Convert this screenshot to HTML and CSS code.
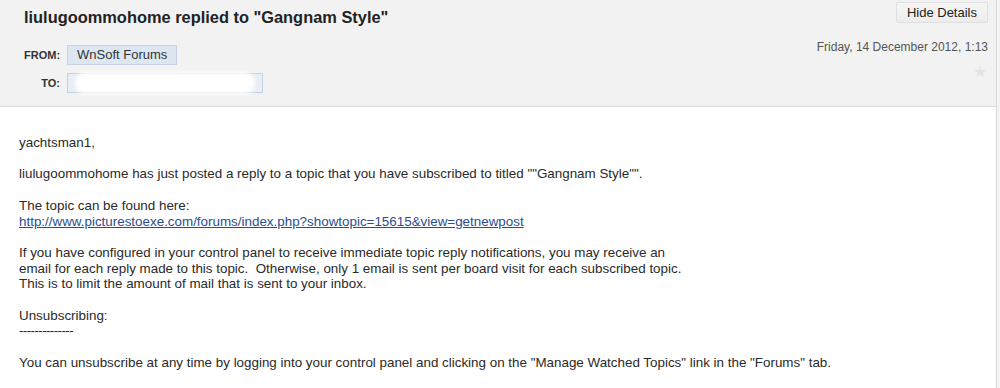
FILE: index.html
```html
<!DOCTYPE html>
<html lang="en">
<head>
    <meta charset="UTF-8">
    <title>liulugoommohome replied to "Gangnam Style"</title>
    <link rel="stylesheet" href="styles.css">
</head>
<body>
    <div class="mail">
        <div class="mail-head">
            <div class="head-left">
                <h1 class="subject">liulugoommohome replied to "Gangnam Style"</h1>
                <div class="addr-row">
                    <span class="addr-label">FROM:</span>
                    <span class="chip">WnSoft Forums</span>
                </div>
                <div class="addr-row">
                    <span class="addr-label">TO:</span>
                    <span class="chip chip-to"><span class="blur"></span></span>
                </div>
            </div>
            <div class="head-right">
                <button class="btn-details">Hide Details</button>
                <div class="date">Friday, 14 December 2012, 1:13</div>
                <div class="star">&#9733;</div>
            </div>
        </div>
        <!-- noi dung email -->
        <div class="mail-body">
            yachtsman1,<br>
            <br>
            liulugoommohome has just posted a reply to a topic that you have subscribed to titled ""Gangnam Style"".<br>
            <br>
            The topic can be found here:<br>
            <a href="#">http://www.picturestoexe.com/forums/index.php?showtopic=15615&amp;view=getnewpost</a><br>
            <br>
            If you have configured in your control panel to receive immediate topic reply notifications, you may receive an<br>
            email for each reply made to this topic.&nbsp; Otherwise, only 1 email is sent per board visit for each subscribed topic.<br>
            This is to limit the amount of mail that is sent to your inbox.<br>
            <br>
            Unsubscribing:<br>
            <span class="dashes">--------------</span><br>
            <br>
            You can unsubscribe at any time by logging into your control panel and clicking on the "Manage Watched Topics" link in the "Forums" tab.
        </div>
    </div>
</body>
</html>
```

FILE: styles.css
```css
*{
    box-sizing: border-box;
    margin: 0;
    padding: 0;
}
body{
    font-family: "Liberation Sans", Arial, sans-serif;
    background: #f4f4f4;
    width: 1000px;
    height: 388px;
    overflow: hidden;
}
.mail{
    width: 997px;
    height: 388px;
    background: #fff;
    border-right: 1px solid #d8d8d8;
}
.mail-head{
    display: flex;
    justify-content: space-between;
    height: 107px;
    background: #f2f2f2;
    border-bottom: 1px solid #dcdcdc;
    padding: 0 8px 0 24px;
}
.subject{
    font-size: 16.4px;
    font-weight: bold;
    color: #222;
    margin-top: 7px;
    line-height: 20px;
}
.addr-row{
    display: flex;
    align-items: center;
    margin-top: 8px;
}
.addr-row:first-of-type{
    margin-top: 18px;
}
.addr-label{
    width: 43px;
    text-align: right;
    padding-right: 7px;
    font-size: 11px;
    font-weight: bold;
    color: #333;
}
.chip{
    height: 20px;
    line-height: 18px;
    padding: 0 9px;
    font-size: 13px;
    color: #333;
    background: #dce7f2;
    border: 1px solid #c3d3e2;
}
.chip-to{
    width: 196px;
    background: #e9eef4;
    padding: 1px 10px;
}
.blur{
    display: block;
    height: 16px;
    background: #fff;
    border-radius: 8px;
    box-shadow: 0 0 4px 3px #fff;
}
.head-right{
    display: flex;
    flex-direction: column;
    align-items: flex-end;
}
.btn-details{
    margin-top: 2px;
    height: 21px;
    padding: 0 10px;
    font-family: "Liberation Sans", Arial, sans-serif;
    font-size: 13px;
    color: #222;
    background: linear-gradient(#f6f6f6, #ececec);
    border: 1px solid #e0e0e0;
    border-radius: 2px;
}
.date{
    margin-top: 17px;
    font-size: 12px;
    color: #555;
}
.star{
    margin-top: 8px;
    margin-right: 1px;
    font-size: 16px;
    color: #e4e4e4;
}
.mail-body{
    padding: 28px 19px 0;
    font-size: 13.4px;
    line-height: 15.7px;
    color: #2a2a2a;
}
.mail-body a{
    color: #2b4d8f;
}
.dashes{
    letter-spacing: -0.6px;
}
```
